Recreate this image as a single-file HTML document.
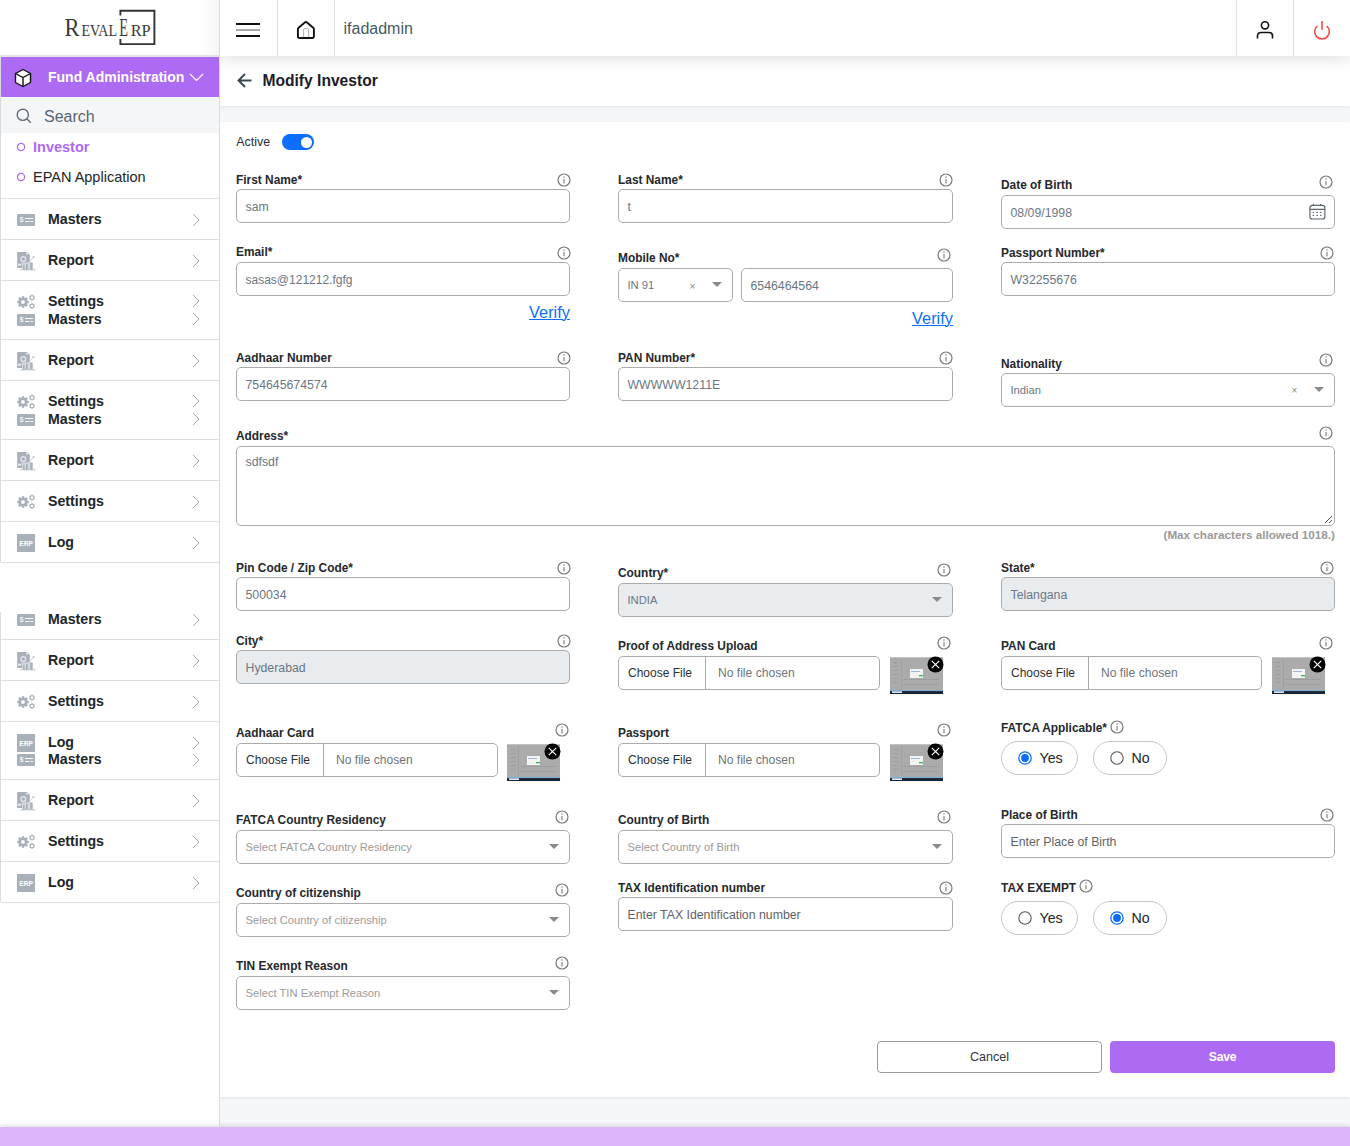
<!DOCTYPE html>
<html><head><meta charset="utf-8"><style>
html,body{margin:0;padding:0;width:1350px;height:1146px;overflow:hidden;background:#fff;}
body{position:relative;font-family:"Liberation Sans", sans-serif;}
.a{position:absolute;box-sizing:border-box;}
.t{position:absolute;white-space:nowrap;}
svg.a{overflow:visible}
</style></head><body>
<div class="a" style="left:220px;top:0;width:1130px;height:1146px;background:#f6f7f9"></div>
<div class="a" style="left:220px;top:122px;width:1130px;height:975px;background:#fff;box-shadow:0 1px 3px rgba(0,0,0,0.09)"></div>
<div class="a" style="left:220px;top:56px;width:1130px;height:50px;background:#fff;box-shadow:0 1px 4px rgba(0,0,0,0.08)"></div>
<div class="a" style="left:220px;top:0;width:1130px;height:56px;background:#fff;box-shadow:0 3px 15px rgba(0,0,0,0.125)"></div>
<div class="a" style="left:277px;top:0px;width:1px;height:56px;background:#dde1e6"></div>
<div class="a" style="left:334px;top:0px;width:1px;height:56px;background:#dde1e6"></div>
<div class="a" style="left:1236px;top:0px;width:1px;height:56px;background:#dde1e6"></div>
<div class="a" style="left:1293px;top:0px;width:1px;height:56px;background:#dde1e6"></div>
<div class="a" style="left:236px;top:23px;width:24px;height:2px;background:#111"></div>
<div class="a" style="left:236px;top:29px;width:24px;height:2px;background:#aaa"></div>
<div class="a" style="left:236px;top:35px;width:24px;height:2px;background:#111"></div>
<svg class="a" style="left:296px;top:20px;" width="20" height="20" viewBox="0 0 20 20"><path d="M1.9 9.2 Q1.9 8.4 2.6 7.8 L9.1 2.3 Q9.9 1.6 10.7 2.3 L17.2 7.8 Q17.9 8.4 17.9 9.2 V16.2 Q17.9 18 16.1 18 H3.7 Q1.9 18 1.9 16.2 Z" fill="none" stroke="#111" stroke-width="1.9" stroke-linejoin="round"/><path d="M7.6 17.2 V9.7 Q7.6 8.5 8.8 8.5 H11.4 Q12.6 8.5 12.6 9.7 V17.2" fill="none" stroke="#a8a8a8" stroke-width="0.9"/></svg>
<div class="t" style="left:343.5px;top:21px;font-size:16px;line-height:16px;color:#455a64;font-weight:400;">ifadadmin</div>
<svg class="a" style="left:1254px;top:19px;" width="22" height="22" viewBox="0 0 22 22"><circle cx="11" cy="6.3" r="3.6" fill="none" stroke="#111" stroke-width="1.6"/><path d="M3.5 19.5 V17 Q3.5 13.5 7 13.5 H15 Q18.5 13.5 18.5 17 V19.5" fill="none" stroke="#111" stroke-width="1.6"/></svg>
<svg class="a" style="left:1311px;top:19px;" width="22" height="22" viewBox="0 0 22 22"><path d="M6.4 7 A7.3 7.3 0 1 0 15.6 7" fill="none" stroke="#f44848" stroke-width="1.6"/><path d="M11 2 V10.8" stroke="#f44848" stroke-width="1.6"/></svg>
<svg class="a" style="left:236px;top:72px;" width="18" height="17" viewBox="0 0 18 17"><path d="M9 2 L2.5 8.5 L9 15 M2.5 8.5 H15.5" fill="none" stroke="#37474f" stroke-width="1.9"/></svg>
<div class="t" style="left:262.5px;top:73px;font-size:15.6px;line-height:15.6px;color:#1c1c28;font-weight:700;">Modify Investor</div>
<div class="a" style="left:0;top:0;width:219px;height:1126px;background:#fff"></div>
<div class="a" style="left:219px;top:0px;width:1px;height:1126px;background:#d8dce1"></div>
<div class="a" style="left:199px;top:0;width:20px;height:56px;background:linear-gradient(90deg,rgba(0,0,0,0),rgba(0,0,0,0.035))"></div>
<div class="a" style="left:0px;top:55px;width:219px;height:2px;background:#dfe3e6"></div>
<div class="a" style="left:0px;top:56px;width:1px;height:506px;background:#d8dce1"></div>
<div class="a" style="left:0px;top:612px;width:1px;height:290px;background:#d8dce1"></div>
<div class="a" style="left:1px;top:57px;width:218px;height:40px;background:#ad6bf4"></div>
<svg class="a" style="left:14px;top:68px;" width="18" height="20" viewBox="0 0 18 20"><path d="M9 1.5 L16.5 5.5 V14.5 L9 18.5 L1.5 14.5 V5.5 Z" fill="#fff" stroke="#111" stroke-width="1.4" stroke-linejoin="round"/><path d="M1.5 5.5 L9 9.5 L16.5 5.5 M9 9.5 V18.5" fill="none" stroke="#111" stroke-width="1.4"/></svg>
<div class="t" style="left:48px;top:70px;font-size:14px;line-height:14px;color:#fff;font-weight:700;">Fund Administration</div>
<svg class="a" style="left:189px;top:73px;" width="15" height="9" viewBox="0 0 15 9"><path d="M1 1 L7.5 7.5 L14 1" fill="none" stroke="#fff" stroke-width="1.1"/></svg>
<div class="a" style="left:1px;top:97px;width:218px;height:36px;background:#f5f6f8"></div>
<svg class="a" style="left:16px;top:108px;" width="16" height="16" viewBox="0 0 16 16"><circle cx="6.8" cy="6.8" r="5.6" fill="none" stroke="#5f6b75" stroke-width="1.4"/><path d="M10.8 10.8 L14.8 14.8" stroke="#5f6b75" stroke-width="1.4"/></svg>
<div class="t" style="left:44px;top:109px;font-size:16px;line-height:16px;color:#5a6470;font-weight:400;">Search</div>
<svg class="a" style="left:16px;top:142px;" width="10" height="10" viewBox="0 0 10 10"><circle cx="5" cy="5" r="3.6" fill="none" stroke="#ad6bf4" stroke-width="1.2"/></svg>
<div class="t" style="left:33px;top:140px;font-size:14.5px;line-height:14.5px;color:#ad6bf4;font-weight:700;">Investor</div>
<svg class="a" style="left:16px;top:172px;" width="10" height="10" viewBox="0 0 10 10"><circle cx="5" cy="5" r="3.6" fill="none" stroke="#ad6bf4" stroke-width="1.2"/></svg>
<div class="t" style="left:33px;top:170px;font-size:14.5px;line-height:14.5px;color:#212529;font-weight:400;">EPAN Application</div>
<div class="a" style="left:1px;top:198px;width:218px;height:1px;background:#dde1e6"></div>
<div class="a" style="left:1px;top:239px;width:218px;height:1px;background:#dde1e6"></div>
<div class="a" style="left:1px;top:280px;width:218px;height:1px;background:#dde1e6"></div>
<div class="a" style="left:1px;top:339px;width:218px;height:1px;background:#dde1e6"></div>
<div class="a" style="left:1px;top:380px;width:218px;height:1px;background:#dde1e6"></div>
<div class="a" style="left:1px;top:439px;width:218px;height:1px;background:#dde1e6"></div>
<div class="a" style="left:1px;top:480px;width:218px;height:1px;background:#dde1e6"></div>
<div class="a" style="left:1px;top:521px;width:218px;height:1px;background:#dde1e6"></div>
<div class="a" style="left:1px;top:562px;width:218px;height:1px;background:#dde1e6"></div>
<div class="a" style="left:1px;top:639px;width:218px;height:1px;background:#dde1e6"></div>
<div class="a" style="left:1px;top:680px;width:218px;height:1px;background:#dde1e6"></div>
<div class="a" style="left:1px;top:721px;width:218px;height:1px;background:#dde1e6"></div>
<div class="a" style="left:1px;top:779px;width:218px;height:1px;background:#dde1e6"></div>
<div class="a" style="left:1px;top:820px;width:218px;height:1px;background:#dde1e6"></div>
<div class="a" style="left:1px;top:861px;width:218px;height:1px;background:#dde1e6"></div>
<div class="a" style="left:1px;top:902px;width:218px;height:1px;background:#dde1e6"></div>
<svg class="a" style="left:17px;top:214px;" width="18" height="12" viewBox="0 0 18 12"><rect x="0" y="0" width="18" height="12" rx="1" fill="#a8b0ba"/><text x="4.5" y="8.0" font-size="7.4" font-weight="400" fill="#fff" text-anchor="middle" font-family="Liberation Sans">$</text><rect x="8" y="4" width="8.2" height="1" fill="#fff"/><rect x="8" y="7" width="4.5" height="1" fill="#fff"/><rect x="13.5" y="7" width="2.7" height="1" fill="#fff"/></svg>
<div class="t" style="left:48px;top:212px;font-size:14.2px;line-height:14.2px;color:#212529;font-weight:700;">Masters</div>
<svg class="a" style="left:192px;top:212.8px;" width="8" height="14" viewBox="0 0 8 14"><path d="M1 1 L7 7 L1 13" fill="none" stroke="#a6acb3" stroke-width="1.0"/></svg>
<svg class="a" style="left:17px;top:252px;" width="19" height="18" viewBox="0 0 19 18"><path d="M0.2 0 H10 L12.8 3 V16 H0.2 Z" fill="#a8b0ba"/><circle cx="10" cy="1.6" r="0.9" fill="#fff"/><circle cx="6.3" cy="7" r="2.4" fill="none" stroke="#e6e9ec" stroke-width="1.3"/><rect x="1" y="11.6" width="3.4" height="2" fill="#e6e9ec"/><rect x="5" y="10.5" width="10.5" height="7.2" fill="#d5dade"/><rect x="6" y="13" width="1.6" height="4.5" fill="#a8b0ba"/><rect x="9" y="11.5" width="1.6" height="6" fill="#a8b0ba"/><rect x="13.3" y="10.5" width="2.3" height="7" fill="#a8b0ba"/><path d="M7.5 9 L10 11.5 L12 10.5 L16.5 5" fill="none" stroke="#cfd4d9" stroke-width="1"/><circle cx="16.5" cy="5" r="1" fill="#b8bfc6"/><rect x="3" y="17.3" width="15.5" height="1" fill="#a8b0ba" opacity="0.8"/></svg>
<div class="t" style="left:48px;top:253px;font-size:14.2px;line-height:14.2px;color:#212529;font-weight:700;">Report</div>
<svg class="a" style="left:192px;top:253.5px;" width="8" height="14" viewBox="0 0 8 14"><path d="M1 1 L7 7 L1 13" fill="none" stroke="#a6acb3" stroke-width="1.0"/></svg>
<svg class="a" style="left:16px;top:293px;" width="19" height="16" viewBox="0 0 19 16"><circle cx="7" cy="9" r="4.524" fill="#a8b0ba"/><rect x="5.8" y="3.2" width="2.4" height="5.8" fill="#a8b0ba" transform="rotate(0.0 7 9)"/><rect x="5.8" y="3.2" width="2.4" height="5.8" fill="#a8b0ba" transform="rotate(45.0 7 9)"/><rect x="5.8" y="3.2" width="2.4" height="5.8" fill="#a8b0ba" transform="rotate(90.0 7 9)"/><rect x="5.8" y="3.2" width="2.4" height="5.8" fill="#a8b0ba" transform="rotate(135.0 7 9)"/><rect x="5.8" y="3.2" width="2.4" height="5.8" fill="#a8b0ba" transform="rotate(180.0 7 9)"/><rect x="5.8" y="3.2" width="2.4" height="5.8" fill="#a8b0ba" transform="rotate(225.0 7 9)"/><rect x="5.8" y="3.2" width="2.4" height="5.8" fill="#a8b0ba" transform="rotate(270.0 7 9)"/><rect x="5.8" y="3.2" width="2.4" height="5.8" fill="#a8b0ba" transform="rotate(315.0 7 9)"/><circle cx="7" cy="9" r="1.9" fill="#fff"/><circle cx="16" cy="4.6" r="2.262" fill="#a8b0ba"/><rect x="15.25" y="1.6999999999999997" width="1.5" height="2.9" fill="#a8b0ba" transform="rotate(0.0 16 4.6)"/><rect x="15.25" y="1.6999999999999997" width="1.5" height="2.9" fill="#a8b0ba" transform="rotate(60.0 16 4.6)"/><rect x="15.25" y="1.6999999999999997" width="1.5" height="2.9" fill="#a8b0ba" transform="rotate(120.0 16 4.6)"/><rect x="15.25" y="1.6999999999999997" width="1.5" height="2.9" fill="#a8b0ba" transform="rotate(180.0 16 4.6)"/><rect x="15.25" y="1.6999999999999997" width="1.5" height="2.9" fill="#a8b0ba" transform="rotate(240.0 16 4.6)"/><rect x="15.25" y="1.6999999999999997" width="1.5" height="2.9" fill="#a8b0ba" transform="rotate(300.0 16 4.6)"/><circle cx="16" cy="4.6" r="1.3" fill="#fff"/><circle cx="16" cy="13" r="2.262" fill="#a8b0ba"/><rect x="15.25" y="10.1" width="1.5" height="2.9" fill="#a8b0ba" transform="rotate(0.0 16 13)"/><rect x="15.25" y="10.1" width="1.5" height="2.9" fill="#a8b0ba" transform="rotate(60.0 16 13)"/><rect x="15.25" y="10.1" width="1.5" height="2.9" fill="#a8b0ba" transform="rotate(120.0 16 13)"/><rect x="15.25" y="10.1" width="1.5" height="2.9" fill="#a8b0ba" transform="rotate(180.0 16 13)"/><rect x="15.25" y="10.1" width="1.5" height="2.9" fill="#a8b0ba" transform="rotate(240.0 16 13)"/><rect x="15.25" y="10.1" width="1.5" height="2.9" fill="#a8b0ba" transform="rotate(300.0 16 13)"/><circle cx="16" cy="13" r="1.3" fill="#fff"/></svg>
<div class="t" style="left:48px;top:294px;font-size:14.2px;line-height:14.2px;color:#212529;font-weight:700;">Settings</div>
<svg class="a" style="left:192px;top:294.3px;" width="8" height="14" viewBox="0 0 8 14"><path d="M1 1 L7 7 L1 13" fill="none" stroke="#a6acb3" stroke-width="1.0"/></svg>
<svg class="a" style="left:17px;top:314px;" width="18" height="12" viewBox="0 0 18 12"><rect x="0" y="0" width="18" height="12" rx="1" fill="#a8b0ba"/><text x="4.5" y="8.0" font-size="7.4" font-weight="400" fill="#fff" text-anchor="middle" font-family="Liberation Sans">$</text><rect x="8" y="4" width="8.2" height="1" fill="#fff"/><rect x="8" y="7" width="4.5" height="1" fill="#fff"/><rect x="13.5" y="7" width="2.7" height="1" fill="#fff"/></svg>
<div class="t" style="left:48px;top:312px;font-size:14.2px;line-height:14.2px;color:#212529;font-weight:700;">Masters</div>
<svg class="a" style="left:192px;top:312.2px;" width="8" height="14" viewBox="0 0 8 14"><path d="M1 1 L7 7 L1 13" fill="none" stroke="#a6acb3" stroke-width="1.0"/></svg>
<svg class="a" style="left:17px;top:352px;" width="19" height="18" viewBox="0 0 19 18"><path d="M0.2 0 H10 L12.8 3 V16 H0.2 Z" fill="#a8b0ba"/><circle cx="10" cy="1.6" r="0.9" fill="#fff"/><circle cx="6.3" cy="7" r="2.4" fill="none" stroke="#e6e9ec" stroke-width="1.3"/><rect x="1" y="11.6" width="3.4" height="2" fill="#e6e9ec"/><rect x="5" y="10.5" width="10.5" height="7.2" fill="#d5dade"/><rect x="6" y="13" width="1.6" height="4.5" fill="#a8b0ba"/><rect x="9" y="11.5" width="1.6" height="6" fill="#a8b0ba"/><rect x="13.3" y="10.5" width="2.3" height="7" fill="#a8b0ba"/><path d="M7.5 9 L10 11.5 L12 10.5 L16.5 5" fill="none" stroke="#cfd4d9" stroke-width="1"/><circle cx="16.5" cy="5" r="1" fill="#b8bfc6"/><rect x="3" y="17.3" width="15.5" height="1" fill="#a8b0ba" opacity="0.8"/></svg>
<div class="t" style="left:48px;top:353px;font-size:14.2px;line-height:14.2px;color:#212529;font-weight:700;">Report</div>
<svg class="a" style="left:192px;top:353.5px;" width="8" height="14" viewBox="0 0 8 14"><path d="M1 1 L7 7 L1 13" fill="none" stroke="#a6acb3" stroke-width="1.0"/></svg>
<svg class="a" style="left:16px;top:393px;" width="19" height="16" viewBox="0 0 19 16"><circle cx="7" cy="9" r="4.524" fill="#a8b0ba"/><rect x="5.8" y="3.2" width="2.4" height="5.8" fill="#a8b0ba" transform="rotate(0.0 7 9)"/><rect x="5.8" y="3.2" width="2.4" height="5.8" fill="#a8b0ba" transform="rotate(45.0 7 9)"/><rect x="5.8" y="3.2" width="2.4" height="5.8" fill="#a8b0ba" transform="rotate(90.0 7 9)"/><rect x="5.8" y="3.2" width="2.4" height="5.8" fill="#a8b0ba" transform="rotate(135.0 7 9)"/><rect x="5.8" y="3.2" width="2.4" height="5.8" fill="#a8b0ba" transform="rotate(180.0 7 9)"/><rect x="5.8" y="3.2" width="2.4" height="5.8" fill="#a8b0ba" transform="rotate(225.0 7 9)"/><rect x="5.8" y="3.2" width="2.4" height="5.8" fill="#a8b0ba" transform="rotate(270.0 7 9)"/><rect x="5.8" y="3.2" width="2.4" height="5.8" fill="#a8b0ba" transform="rotate(315.0 7 9)"/><circle cx="7" cy="9" r="1.9" fill="#fff"/><circle cx="16" cy="4.6" r="2.262" fill="#a8b0ba"/><rect x="15.25" y="1.6999999999999997" width="1.5" height="2.9" fill="#a8b0ba" transform="rotate(0.0 16 4.6)"/><rect x="15.25" y="1.6999999999999997" width="1.5" height="2.9" fill="#a8b0ba" transform="rotate(60.0 16 4.6)"/><rect x="15.25" y="1.6999999999999997" width="1.5" height="2.9" fill="#a8b0ba" transform="rotate(120.0 16 4.6)"/><rect x="15.25" y="1.6999999999999997" width="1.5" height="2.9" fill="#a8b0ba" transform="rotate(180.0 16 4.6)"/><rect x="15.25" y="1.6999999999999997" width="1.5" height="2.9" fill="#a8b0ba" transform="rotate(240.0 16 4.6)"/><rect x="15.25" y="1.6999999999999997" width="1.5" height="2.9" fill="#a8b0ba" transform="rotate(300.0 16 4.6)"/><circle cx="16" cy="4.6" r="1.3" fill="#fff"/><circle cx="16" cy="13" r="2.262" fill="#a8b0ba"/><rect x="15.25" y="10.1" width="1.5" height="2.9" fill="#a8b0ba" transform="rotate(0.0 16 13)"/><rect x="15.25" y="10.1" width="1.5" height="2.9" fill="#a8b0ba" transform="rotate(60.0 16 13)"/><rect x="15.25" y="10.1" width="1.5" height="2.9" fill="#a8b0ba" transform="rotate(120.0 16 13)"/><rect x="15.25" y="10.1" width="1.5" height="2.9" fill="#a8b0ba" transform="rotate(180.0 16 13)"/><rect x="15.25" y="10.1" width="1.5" height="2.9" fill="#a8b0ba" transform="rotate(240.0 16 13)"/><rect x="15.25" y="10.1" width="1.5" height="2.9" fill="#a8b0ba" transform="rotate(300.0 16 13)"/><circle cx="16" cy="13" r="1.3" fill="#fff"/></svg>
<div class="t" style="left:48px;top:394px;font-size:14.2px;line-height:14.2px;color:#212529;font-weight:700;">Settings</div>
<svg class="a" style="left:192px;top:394.3px;" width="8" height="14" viewBox="0 0 8 14"><path d="M1 1 L7 7 L1 13" fill="none" stroke="#a6acb3" stroke-width="1.0"/></svg>
<svg class="a" style="left:17px;top:414px;" width="18" height="12" viewBox="0 0 18 12"><rect x="0" y="0" width="18" height="12" rx="1" fill="#a8b0ba"/><text x="4.5" y="8.0" font-size="7.4" font-weight="400" fill="#fff" text-anchor="middle" font-family="Liberation Sans">$</text><rect x="8" y="4" width="8.2" height="1" fill="#fff"/><rect x="8" y="7" width="4.5" height="1" fill="#fff"/><rect x="13.5" y="7" width="2.7" height="1" fill="#fff"/></svg>
<div class="t" style="left:48px;top:412px;font-size:14.2px;line-height:14.2px;color:#212529;font-weight:700;">Masters</div>
<svg class="a" style="left:192px;top:412.2px;" width="8" height="14" viewBox="0 0 8 14"><path d="M1 1 L7 7 L1 13" fill="none" stroke="#a6acb3" stroke-width="1.0"/></svg>
<svg class="a" style="left:17px;top:452px;" width="19" height="18" viewBox="0 0 19 18"><path d="M0.2 0 H10 L12.8 3 V16 H0.2 Z" fill="#a8b0ba"/><circle cx="10" cy="1.6" r="0.9" fill="#fff"/><circle cx="6.3" cy="7" r="2.4" fill="none" stroke="#e6e9ec" stroke-width="1.3"/><rect x="1" y="11.6" width="3.4" height="2" fill="#e6e9ec"/><rect x="5" y="10.5" width="10.5" height="7.2" fill="#d5dade"/><rect x="6" y="13" width="1.6" height="4.5" fill="#a8b0ba"/><rect x="9" y="11.5" width="1.6" height="6" fill="#a8b0ba"/><rect x="13.3" y="10.5" width="2.3" height="7" fill="#a8b0ba"/><path d="M7.5 9 L10 11.5 L12 10.5 L16.5 5" fill="none" stroke="#cfd4d9" stroke-width="1"/><circle cx="16.5" cy="5" r="1" fill="#b8bfc6"/><rect x="3" y="17.3" width="15.5" height="1" fill="#a8b0ba" opacity="0.8"/></svg>
<div class="t" style="left:48px;top:453px;font-size:14.2px;line-height:14.2px;color:#212529;font-weight:700;">Report</div>
<svg class="a" style="left:192px;top:453.5px;" width="8" height="14" viewBox="0 0 8 14"><path d="M1 1 L7 7 L1 13" fill="none" stroke="#a6acb3" stroke-width="1.0"/></svg>
<svg class="a" style="left:16px;top:493px;" width="19" height="16" viewBox="0 0 19 16"><circle cx="7" cy="9" r="4.524" fill="#a8b0ba"/><rect x="5.8" y="3.2" width="2.4" height="5.8" fill="#a8b0ba" transform="rotate(0.0 7 9)"/><rect x="5.8" y="3.2" width="2.4" height="5.8" fill="#a8b0ba" transform="rotate(45.0 7 9)"/><rect x="5.8" y="3.2" width="2.4" height="5.8" fill="#a8b0ba" transform="rotate(90.0 7 9)"/><rect x="5.8" y="3.2" width="2.4" height="5.8" fill="#a8b0ba" transform="rotate(135.0 7 9)"/><rect x="5.8" y="3.2" width="2.4" height="5.8" fill="#a8b0ba" transform="rotate(180.0 7 9)"/><rect x="5.8" y="3.2" width="2.4" height="5.8" fill="#a8b0ba" transform="rotate(225.0 7 9)"/><rect x="5.8" y="3.2" width="2.4" height="5.8" fill="#a8b0ba" transform="rotate(270.0 7 9)"/><rect x="5.8" y="3.2" width="2.4" height="5.8" fill="#a8b0ba" transform="rotate(315.0 7 9)"/><circle cx="7" cy="9" r="1.9" fill="#fff"/><circle cx="16" cy="4.6" r="2.262" fill="#a8b0ba"/><rect x="15.25" y="1.6999999999999997" width="1.5" height="2.9" fill="#a8b0ba" transform="rotate(0.0 16 4.6)"/><rect x="15.25" y="1.6999999999999997" width="1.5" height="2.9" fill="#a8b0ba" transform="rotate(60.0 16 4.6)"/><rect x="15.25" y="1.6999999999999997" width="1.5" height="2.9" fill="#a8b0ba" transform="rotate(120.0 16 4.6)"/><rect x="15.25" y="1.6999999999999997" width="1.5" height="2.9" fill="#a8b0ba" transform="rotate(180.0 16 4.6)"/><rect x="15.25" y="1.6999999999999997" width="1.5" height="2.9" fill="#a8b0ba" transform="rotate(240.0 16 4.6)"/><rect x="15.25" y="1.6999999999999997" width="1.5" height="2.9" fill="#a8b0ba" transform="rotate(300.0 16 4.6)"/><circle cx="16" cy="4.6" r="1.3" fill="#fff"/><circle cx="16" cy="13" r="2.262" fill="#a8b0ba"/><rect x="15.25" y="10.1" width="1.5" height="2.9" fill="#a8b0ba" transform="rotate(0.0 16 13)"/><rect x="15.25" y="10.1" width="1.5" height="2.9" fill="#a8b0ba" transform="rotate(60.0 16 13)"/><rect x="15.25" y="10.1" width="1.5" height="2.9" fill="#a8b0ba" transform="rotate(120.0 16 13)"/><rect x="15.25" y="10.1" width="1.5" height="2.9" fill="#a8b0ba" transform="rotate(180.0 16 13)"/><rect x="15.25" y="10.1" width="1.5" height="2.9" fill="#a8b0ba" transform="rotate(240.0 16 13)"/><rect x="15.25" y="10.1" width="1.5" height="2.9" fill="#a8b0ba" transform="rotate(300.0 16 13)"/><circle cx="16" cy="13" r="1.3" fill="#fff"/></svg>
<div class="t" style="left:48px;top:494px;font-size:14.2px;line-height:14.2px;color:#212529;font-weight:700;">Settings</div>
<svg class="a" style="left:192px;top:494.5px;" width="8" height="14" viewBox="0 0 8 14"><path d="M1 1 L7 7 L1 13" fill="none" stroke="#a6acb3" stroke-width="1.0"/></svg>
<svg class="a" style="left:17px;top:534px;" width="18" height="18" viewBox="0 0 18 18"><rect x="0" y="0" width="18" height="18" fill="#a8b0ba"/><text x="2.3" y="11.8" font-size="7.8" font-weight="700" fill="#fff" font-family="Liberation Sans" textLength="13.6" lengthAdjust="spacingAndGlyphs">ERP</text></svg>
<div class="t" style="left:48px;top:535px;font-size:14.2px;line-height:14.2px;color:#212529;font-weight:700;">Log</div>
<svg class="a" style="left:192px;top:535.5px;" width="8" height="14" viewBox="0 0 8 14"><path d="M1 1 L7 7 L1 13" fill="none" stroke="#a6acb3" stroke-width="1.0"/></svg>
<svg class="a" style="left:17px;top:614px;" width="18" height="12" viewBox="0 0 18 12"><rect x="0" y="0" width="18" height="12" rx="1" fill="#a8b0ba"/><text x="4.5" y="8.0" font-size="7.4" font-weight="400" fill="#fff" text-anchor="middle" font-family="Liberation Sans">$</text><rect x="8" y="4" width="8.2" height="1" fill="#fff"/><rect x="8" y="7" width="4.5" height="1" fill="#fff"/><rect x="13.5" y="7" width="2.7" height="1" fill="#fff"/></svg>
<div class="t" style="left:48px;top:612px;font-size:14.2px;line-height:14.2px;color:#212529;font-weight:700;">Masters</div>
<svg class="a" style="left:192px;top:612.5px;" width="8" height="14" viewBox="0 0 8 14"><path d="M1 1 L7 7 L1 13" fill="none" stroke="#a6acb3" stroke-width="1.0"/></svg>
<svg class="a" style="left:17px;top:652px;" width="19" height="18" viewBox="0 0 19 18"><path d="M0.2 0 H10 L12.8 3 V16 H0.2 Z" fill="#a8b0ba"/><circle cx="10" cy="1.6" r="0.9" fill="#fff"/><circle cx="6.3" cy="7" r="2.4" fill="none" stroke="#e6e9ec" stroke-width="1.3"/><rect x="1" y="11.6" width="3.4" height="2" fill="#e6e9ec"/><rect x="5" y="10.5" width="10.5" height="7.2" fill="#d5dade"/><rect x="6" y="13" width="1.6" height="4.5" fill="#a8b0ba"/><rect x="9" y="11.5" width="1.6" height="6" fill="#a8b0ba"/><rect x="13.3" y="10.5" width="2.3" height="7" fill="#a8b0ba"/><path d="M7.5 9 L10 11.5 L12 10.5 L16.5 5" fill="none" stroke="#cfd4d9" stroke-width="1"/><circle cx="16.5" cy="5" r="1" fill="#b8bfc6"/><rect x="3" y="17.3" width="15.5" height="1" fill="#a8b0ba" opacity="0.8"/></svg>
<div class="t" style="left:48px;top:653px;font-size:14.2px;line-height:14.2px;color:#212529;font-weight:700;">Report</div>
<svg class="a" style="left:192px;top:653.5px;" width="8" height="14" viewBox="0 0 8 14"><path d="M1 1 L7 7 L1 13" fill="none" stroke="#a6acb3" stroke-width="1.0"/></svg>
<svg class="a" style="left:16px;top:693px;" width="19" height="16" viewBox="0 0 19 16"><circle cx="7" cy="9" r="4.524" fill="#a8b0ba"/><rect x="5.8" y="3.2" width="2.4" height="5.8" fill="#a8b0ba" transform="rotate(0.0 7 9)"/><rect x="5.8" y="3.2" width="2.4" height="5.8" fill="#a8b0ba" transform="rotate(45.0 7 9)"/><rect x="5.8" y="3.2" width="2.4" height="5.8" fill="#a8b0ba" transform="rotate(90.0 7 9)"/><rect x="5.8" y="3.2" width="2.4" height="5.8" fill="#a8b0ba" transform="rotate(135.0 7 9)"/><rect x="5.8" y="3.2" width="2.4" height="5.8" fill="#a8b0ba" transform="rotate(180.0 7 9)"/><rect x="5.8" y="3.2" width="2.4" height="5.8" fill="#a8b0ba" transform="rotate(225.0 7 9)"/><rect x="5.8" y="3.2" width="2.4" height="5.8" fill="#a8b0ba" transform="rotate(270.0 7 9)"/><rect x="5.8" y="3.2" width="2.4" height="5.8" fill="#a8b0ba" transform="rotate(315.0 7 9)"/><circle cx="7" cy="9" r="1.9" fill="#fff"/><circle cx="16" cy="4.6" r="2.262" fill="#a8b0ba"/><rect x="15.25" y="1.6999999999999997" width="1.5" height="2.9" fill="#a8b0ba" transform="rotate(0.0 16 4.6)"/><rect x="15.25" y="1.6999999999999997" width="1.5" height="2.9" fill="#a8b0ba" transform="rotate(60.0 16 4.6)"/><rect x="15.25" y="1.6999999999999997" width="1.5" height="2.9" fill="#a8b0ba" transform="rotate(120.0 16 4.6)"/><rect x="15.25" y="1.6999999999999997" width="1.5" height="2.9" fill="#a8b0ba" transform="rotate(180.0 16 4.6)"/><rect x="15.25" y="1.6999999999999997" width="1.5" height="2.9" fill="#a8b0ba" transform="rotate(240.0 16 4.6)"/><rect x="15.25" y="1.6999999999999997" width="1.5" height="2.9" fill="#a8b0ba" transform="rotate(300.0 16 4.6)"/><circle cx="16" cy="4.6" r="1.3" fill="#fff"/><circle cx="16" cy="13" r="2.262" fill="#a8b0ba"/><rect x="15.25" y="10.1" width="1.5" height="2.9" fill="#a8b0ba" transform="rotate(0.0 16 13)"/><rect x="15.25" y="10.1" width="1.5" height="2.9" fill="#a8b0ba" transform="rotate(60.0 16 13)"/><rect x="15.25" y="10.1" width="1.5" height="2.9" fill="#a8b0ba" transform="rotate(120.0 16 13)"/><rect x="15.25" y="10.1" width="1.5" height="2.9" fill="#a8b0ba" transform="rotate(180.0 16 13)"/><rect x="15.25" y="10.1" width="1.5" height="2.9" fill="#a8b0ba" transform="rotate(240.0 16 13)"/><rect x="15.25" y="10.1" width="1.5" height="2.9" fill="#a8b0ba" transform="rotate(300.0 16 13)"/><circle cx="16" cy="13" r="1.3" fill="#fff"/></svg>
<div class="t" style="left:48px;top:694px;font-size:14.2px;line-height:14.2px;color:#212529;font-weight:700;">Settings</div>
<svg class="a" style="left:192px;top:694.5px;" width="8" height="14" viewBox="0 0 8 14"><path d="M1 1 L7 7 L1 13" fill="none" stroke="#a6acb3" stroke-width="1.0"/></svg>
<svg class="a" style="left:17px;top:734px;" width="18" height="18" viewBox="0 0 18 18"><rect x="0" y="0" width="18" height="18" fill="#a8b0ba"/><text x="2.3" y="11.8" font-size="7.8" font-weight="700" fill="#fff" font-family="Liberation Sans" textLength="13.6" lengthAdjust="spacingAndGlyphs">ERP</text></svg>
<div class="t" style="left:48px;top:735px;font-size:14.2px;line-height:14.2px;color:#212529;font-weight:700;">Log</div>
<svg class="a" style="left:192px;top:735.5px;" width="8" height="14" viewBox="0 0 8 14"><path d="M1 1 L7 7 L1 13" fill="none" stroke="#a6acb3" stroke-width="1.0"/></svg>
<svg class="a" style="left:17px;top:754px;" width="18" height="12" viewBox="0 0 18 12"><rect x="0" y="0" width="18" height="12" rx="1" fill="#a8b0ba"/><text x="4.5" y="8.0" font-size="7.4" font-weight="400" fill="#fff" text-anchor="middle" font-family="Liberation Sans">$</text><rect x="8" y="4" width="8.2" height="1" fill="#fff"/><rect x="8" y="7" width="4.5" height="1" fill="#fff"/><rect x="13.5" y="7" width="2.7" height="1" fill="#fff"/></svg>
<div class="t" style="left:48px;top:752px;font-size:14.2px;line-height:14.2px;color:#212529;font-weight:700;">Masters</div>
<svg class="a" style="left:192px;top:753.0px;" width="8" height="14" viewBox="0 0 8 14"><path d="M1 1 L7 7 L1 13" fill="none" stroke="#a6acb3" stroke-width="1.0"/></svg>
<svg class="a" style="left:17px;top:792px;" width="19" height="18" viewBox="0 0 19 18"><path d="M0.2 0 H10 L12.8 3 V16 H0.2 Z" fill="#a8b0ba"/><circle cx="10" cy="1.6" r="0.9" fill="#fff"/><circle cx="6.3" cy="7" r="2.4" fill="none" stroke="#e6e9ec" stroke-width="1.3"/><rect x="1" y="11.6" width="3.4" height="2" fill="#e6e9ec"/><rect x="5" y="10.5" width="10.5" height="7.2" fill="#d5dade"/><rect x="6" y="13" width="1.6" height="4.5" fill="#a8b0ba"/><rect x="9" y="11.5" width="1.6" height="6" fill="#a8b0ba"/><rect x="13.3" y="10.5" width="2.3" height="7" fill="#a8b0ba"/><path d="M7.5 9 L10 11.5 L12 10.5 L16.5 5" fill="none" stroke="#cfd4d9" stroke-width="1"/><circle cx="16.5" cy="5" r="1" fill="#b8bfc6"/><rect x="3" y="17.3" width="15.5" height="1" fill="#a8b0ba" opacity="0.8"/></svg>
<div class="t" style="left:48px;top:793px;font-size:14.2px;line-height:14.2px;color:#212529;font-weight:700;">Report</div>
<svg class="a" style="left:192px;top:793.5px;" width="8" height="14" viewBox="0 0 8 14"><path d="M1 1 L7 7 L1 13" fill="none" stroke="#a6acb3" stroke-width="1.0"/></svg>
<svg class="a" style="left:16px;top:833px;" width="19" height="16" viewBox="0 0 19 16"><circle cx="7" cy="9" r="4.524" fill="#a8b0ba"/><rect x="5.8" y="3.2" width="2.4" height="5.8" fill="#a8b0ba" transform="rotate(0.0 7 9)"/><rect x="5.8" y="3.2" width="2.4" height="5.8" fill="#a8b0ba" transform="rotate(45.0 7 9)"/><rect x="5.8" y="3.2" width="2.4" height="5.8" fill="#a8b0ba" transform="rotate(90.0 7 9)"/><rect x="5.8" y="3.2" width="2.4" height="5.8" fill="#a8b0ba" transform="rotate(135.0 7 9)"/><rect x="5.8" y="3.2" width="2.4" height="5.8" fill="#a8b0ba" transform="rotate(180.0 7 9)"/><rect x="5.8" y="3.2" width="2.4" height="5.8" fill="#a8b0ba" transform="rotate(225.0 7 9)"/><rect x="5.8" y="3.2" width="2.4" height="5.8" fill="#a8b0ba" transform="rotate(270.0 7 9)"/><rect x="5.8" y="3.2" width="2.4" height="5.8" fill="#a8b0ba" transform="rotate(315.0 7 9)"/><circle cx="7" cy="9" r="1.9" fill="#fff"/><circle cx="16" cy="4.6" r="2.262" fill="#a8b0ba"/><rect x="15.25" y="1.6999999999999997" width="1.5" height="2.9" fill="#a8b0ba" transform="rotate(0.0 16 4.6)"/><rect x="15.25" y="1.6999999999999997" width="1.5" height="2.9" fill="#a8b0ba" transform="rotate(60.0 16 4.6)"/><rect x="15.25" y="1.6999999999999997" width="1.5" height="2.9" fill="#a8b0ba" transform="rotate(120.0 16 4.6)"/><rect x="15.25" y="1.6999999999999997" width="1.5" height="2.9" fill="#a8b0ba" transform="rotate(180.0 16 4.6)"/><rect x="15.25" y="1.6999999999999997" width="1.5" height="2.9" fill="#a8b0ba" transform="rotate(240.0 16 4.6)"/><rect x="15.25" y="1.6999999999999997" width="1.5" height="2.9" fill="#a8b0ba" transform="rotate(300.0 16 4.6)"/><circle cx="16" cy="4.6" r="1.3" fill="#fff"/><circle cx="16" cy="13" r="2.262" fill="#a8b0ba"/><rect x="15.25" y="10.1" width="1.5" height="2.9" fill="#a8b0ba" transform="rotate(0.0 16 13)"/><rect x="15.25" y="10.1" width="1.5" height="2.9" fill="#a8b0ba" transform="rotate(60.0 16 13)"/><rect x="15.25" y="10.1" width="1.5" height="2.9" fill="#a8b0ba" transform="rotate(120.0 16 13)"/><rect x="15.25" y="10.1" width="1.5" height="2.9" fill="#a8b0ba" transform="rotate(180.0 16 13)"/><rect x="15.25" y="10.1" width="1.5" height="2.9" fill="#a8b0ba" transform="rotate(240.0 16 13)"/><rect x="15.25" y="10.1" width="1.5" height="2.9" fill="#a8b0ba" transform="rotate(300.0 16 13)"/><circle cx="16" cy="13" r="1.3" fill="#fff"/></svg>
<div class="t" style="left:48px;top:834px;font-size:14.2px;line-height:14.2px;color:#212529;font-weight:700;">Settings</div>
<svg class="a" style="left:192px;top:834.5px;" width="8" height="14" viewBox="0 0 8 14"><path d="M1 1 L7 7 L1 13" fill="none" stroke="#a6acb3" stroke-width="1.0"/></svg>
<svg class="a" style="left:17px;top:874px;" width="18" height="18" viewBox="0 0 18 18"><rect x="0" y="0" width="18" height="18" fill="#a8b0ba"/><text x="2.3" y="11.8" font-size="7.8" font-weight="700" fill="#fff" font-family="Liberation Sans" textLength="13.6" lengthAdjust="spacingAndGlyphs">ERP</text></svg>
<div class="t" style="left:48px;top:875px;font-size:14.2px;line-height:14.2px;color:#212529;font-weight:700;">Log</div>
<svg class="a" style="left:192px;top:875.5px;" width="8" height="14" viewBox="0 0 8 14"><path d="M1 1 L7 7 L1 13" fill="none" stroke="#a6acb3" stroke-width="1.0"/></svg>
<div class="t" style="left:236.3px;top:136px;font-size:12.4px;line-height:12.4px;color:#2b2f33;font-weight:400;">Active</div>
<div class="a" style="left:282px;top:134px;width:32px;height:16px;background:#0d6efd;border-radius:8px"></div>
<div class="a" style="left:300.5px;top:136.5px;width:11px;height:11px;background:#fff;border-radius:50%"></div>
<div class="t" style="left:236px;top:175px;font-size:11.9px;line-height:11.9px;color:#25282d;font-weight:700;">First Name*</div>
<svg class="a" style="left:556.5px;top:173px;" width="14" height="14" viewBox="0 0 14 14"><circle cx="7" cy="7" r="6" fill="none" stroke="#7a7a7a" stroke-width="1.2"/><rect x="6.45" y="6" width="1.1" height="4.4" fill="#7a7a7a"/><circle cx="7" cy="4.1" r="0.75" fill="#7a7a7a"/></svg>
<div class="a" style="left:236px;top:189px;width:334px;height:34px;border:1px solid #ababab;border-radius:5px;background:#fff"></div>
<div class="t" style="left:245.5px;top:201px;font-size:12.3px;line-height:12.3px;color:#6b7785;font-weight:400;">sam</div>
<div class="t" style="left:236px;top:247px;font-size:11.9px;line-height:11.9px;color:#25282d;font-weight:700;">Email*</div>
<svg class="a" style="left:556.5px;top:246px;" width="14" height="14" viewBox="0 0 14 14"><circle cx="7" cy="7" r="6" fill="none" stroke="#7a7a7a" stroke-width="1.2"/><rect x="6.45" y="6" width="1.1" height="4.4" fill="#7a7a7a"/><circle cx="7" cy="4.1" r="0.75" fill="#7a7a7a"/></svg>
<div class="a" style="left:236px;top:262px;width:334px;height:34px;border:1px solid #ababab;border-radius:5px;background:#fff"></div>
<div class="t" style="left:245.5px;top:274px;font-size:12.0px;line-height:12.0px;color:#6b7785;font-weight:400;">sasas@121212.fgfg</div>
<div class="t" style="right:780px;top:304px;font-size:16.4px;line-height:16.4px;color:#0d6efd;font-weight:400;text-decoration:underline;text-underline-offset:1px;text-decoration-thickness:1px">Verify</div>
<div class="t" style="left:236px;top:353px;font-size:11.9px;line-height:11.9px;color:#25282d;font-weight:700;">Aadhaar Number</div>
<svg class="a" style="left:556.5px;top:350.5px;" width="14" height="14" viewBox="0 0 14 14"><circle cx="7" cy="7" r="6" fill="none" stroke="#7a7a7a" stroke-width="1.2"/><rect x="6.45" y="6" width="1.1" height="4.4" fill="#7a7a7a"/><circle cx="7" cy="4.1" r="0.75" fill="#7a7a7a"/></svg>
<div class="a" style="left:236px;top:367px;width:334px;height:34px;border:1px solid #ababab;border-radius:5px;background:#fff"></div>
<div class="t" style="left:245.5px;top:379px;font-size:12.3px;line-height:12.3px;color:#6b7785;font-weight:400;">754645674574</div>
<div class="t" style="left:236px;top:431px;font-size:11.9px;line-height:11.9px;color:#25282d;font-weight:700;">Address*</div>
<svg class="a" style="left:1319px;top:426px;" width="14" height="14" viewBox="0 0 14 14"><circle cx="7" cy="7" r="6" fill="none" stroke="#7a7a7a" stroke-width="1.2"/><rect x="6.45" y="6" width="1.1" height="4.4" fill="#7a7a7a"/><circle cx="7" cy="4.1" r="0.75" fill="#7a7a7a"/></svg>
<div class="a" style="left:236px;top:446px;width:1099px;height:80px;border:1px solid #ababab;border-radius:5px;background:#fff"></div>
<div class="t" style="left:245.5px;top:456px;font-size:12.3px;line-height:12.3px;color:#6b7785;font-weight:400;">sdfsdf</div>
<svg class="a" style="left:1323px;top:514px;" width="10" height="10" viewBox="0 0 10 10"><path d="M9 2 L2 9 M9 6 L6 9" stroke="#444" stroke-width="0.9"/></svg>
<div class="t" style="right:15px;top:529px;font-size:11.7px;line-height:11.7px;color:#9a9a9a;font-weight:700;">(Max characters allowed 1018.)</div>
<div class="t" style="left:236px;top:563px;font-size:11.9px;line-height:11.9px;color:#25282d;font-weight:700;">Pin Code / Zip Code*</div>
<svg class="a" style="left:556.5px;top:560.5px;" width="14" height="14" viewBox="0 0 14 14"><circle cx="7" cy="7" r="6" fill="none" stroke="#7a7a7a" stroke-width="1.2"/><rect x="6.45" y="6" width="1.1" height="4.4" fill="#7a7a7a"/><circle cx="7" cy="4.1" r="0.75" fill="#7a7a7a"/></svg>
<div class="a" style="left:236px;top:577px;width:334px;height:34px;border:1px solid #ababab;border-radius:5px;background:#fff"></div>
<div class="t" style="left:245.5px;top:589px;font-size:12.3px;line-height:12.3px;color:#6b7785;font-weight:400;">500034</div>
<div class="t" style="left:236px;top:636px;font-size:11.9px;line-height:11.9px;color:#25282d;font-weight:700;">City*</div>
<svg class="a" style="left:556.5px;top:633.5px;" width="14" height="14" viewBox="0 0 14 14"><circle cx="7" cy="7" r="6" fill="none" stroke="#7a7a7a" stroke-width="1.2"/><rect x="6.45" y="6" width="1.1" height="4.4" fill="#7a7a7a"/><circle cx="7" cy="4.1" r="0.75" fill="#7a7a7a"/></svg>
<div class="a" style="left:236px;top:650px;width:334px;height:34px;border:1px solid #ababab;border-radius:5px;background:#e9ecef"></div>
<div class="t" style="left:245.5px;top:662px;font-size:12.3px;line-height:12.3px;color:#6b7785;font-weight:400;">Hyderabad</div>
<div class="t" style="left:236px;top:728px;font-size:11.9px;line-height:11.9px;color:#25282d;font-weight:700;">Aadhaar Card</div>
<svg class="a" style="left:554.5px;top:722.8px;" width="14" height="14" viewBox="0 0 14 14"><circle cx="7" cy="7" r="6" fill="none" stroke="#7a7a7a" stroke-width="1.2"/><rect x="6.45" y="6" width="1.1" height="4.4" fill="#7a7a7a"/><circle cx="7" cy="4.1" r="0.75" fill="#7a7a7a"/></svg>
<div class="a" style="left:236px;top:743px;width:262px;height:34px;border:1px solid #ababab;border-radius:5px;background:#fff"></div>
<div class="a" style="left:323px;top:743px;width:1px;height:34px;background:#ababab"></div>
<div class="t" style="left:246px;top:754px;font-size:12.0px;line-height:12.0px;color:#2b2f33;font-weight:400;">Choose File</div>
<div class="t" style="left:336px;top:754px;font-size:12.1px;line-height:12.1px;color:#6c757d;font-weight:400;">No file chosen</div>
<svg class="a" style="left:507px;top:744px;" width="53" height="37" viewBox="0 0 53 37"><rect x="0" y="0" width="53" height="37" fill="#ababab"/><rect x="0" y="0" width="53" height="1" fill="#c4c4c4"/><rect x="11" y="2" width="0.6" height="30" fill="#999"/><g fill="#9c9c9c"><rect x="3" y="5" width="5" height="0.8"/><rect x="3" y="9" width="5" height="0.8"/><rect x="3" y="13" width="5" height="0.8"/><rect x="3" y="17" width="5" height="0.8"/><rect x="3" y="21" width="5" height="0.8"/><rect x="3" y="25" width="5" height="0.8"/><rect x="13" y="22" width="36" height="0.8"/><rect x="13" y="27" width="36" height="0.8"/></g><rect x="20" y="12" width="13" height="9" fill="#f4f4f4"/><rect x="21" y="14" width="9" height="0.8" fill="#8aa6d6"/><rect x="29" y="18" width="4" height="1.3" fill="#3cb44b"/><rect x="0" y="34" width="53" height="3" fill="#1d2230"/><rect x="2" y="34.2" width="10" height="1.8" fill="#d8e4ef"/><rect x="0" y="33.2" width="53" height="0.9" fill="#6aaee0"/></svg>
<svg class="a" style="left:544px;top:743px;" width="17" height="17" viewBox="0 0 17 17"><circle cx="8.5" cy="8.5" r="8" fill="#000"/><path d="M4.8 4.8 L12.2 12.2 M12.2 4.8 L4.8 12.2" stroke="#fff" stroke-width="1.2"/></svg>
<div class="t" style="left:236px;top:815px;font-size:11.9px;line-height:11.9px;color:#25282d;font-weight:700;">FATCA Country Residency</div>
<svg class="a" style="left:554.5px;top:810px;" width="14" height="14" viewBox="0 0 14 14"><circle cx="7" cy="7" r="6" fill="none" stroke="#7a7a7a" stroke-width="1.2"/><rect x="6.45" y="6" width="1.1" height="4.4" fill="#7a7a7a"/><circle cx="7" cy="4.1" r="0.75" fill="#7a7a7a"/></svg>
<div class="a" style="left:236px;top:830px;width:334px;height:34px;border:1px solid #ababab;border-radius:5px;background:#fff"></div>
<div class="t" style="left:245.5px;top:842px;font-size:11.2px;line-height:11.2px;color:#9b9b9b;font-weight:400;">Select FATCA Country Residency</div>
<svg class="a" style="left:549px;top:843.9px;" width="10" height="5" viewBox="0 0 10 5"><path d="M0 0 H10 L5 5 Z" fill="#8a8a8a"/></svg>
<div class="t" style="left:236px;top:888px;font-size:11.9px;line-height:11.9px;color:#25282d;font-weight:700;">Country of citizenship</div>
<svg class="a" style="left:554.5px;top:883px;" width="14" height="14" viewBox="0 0 14 14"><circle cx="7" cy="7" r="6" fill="none" stroke="#7a7a7a" stroke-width="1.2"/><rect x="6.45" y="6" width="1.1" height="4.4" fill="#7a7a7a"/><circle cx="7" cy="4.1" r="0.75" fill="#7a7a7a"/></svg>
<div class="a" style="left:236px;top:903px;width:334px;height:34px;border:1px solid #ababab;border-radius:5px;background:#fff"></div>
<div class="t" style="left:245.5px;top:915px;font-size:11.2px;line-height:11.2px;color:#9b9b9b;font-weight:400;">Select Country of citizenship</div>
<svg class="a" style="left:549px;top:916.9px;" width="10" height="5" viewBox="0 0 10 5"><path d="M0 0 H10 L5 5 Z" fill="#8a8a8a"/></svg>
<div class="t" style="left:236px;top:961px;font-size:11.9px;line-height:11.9px;color:#25282d;font-weight:700;">TIN Exempt Reason</div>
<svg class="a" style="left:554.5px;top:955.8px;" width="14" height="14" viewBox="0 0 14 14"><circle cx="7" cy="7" r="6" fill="none" stroke="#7a7a7a" stroke-width="1.2"/><rect x="6.45" y="6" width="1.1" height="4.4" fill="#7a7a7a"/><circle cx="7" cy="4.1" r="0.75" fill="#7a7a7a"/></svg>
<div class="a" style="left:236px;top:976px;width:334px;height:34px;border:1px solid #ababab;border-radius:5px;background:#fff"></div>
<div class="t" style="left:245.5px;top:988px;font-size:11.2px;line-height:11.2px;color:#9b9b9b;font-weight:400;">Select TIN Exempt Reason</div>
<svg class="a" style="left:549px;top:989.9px;" width="10" height="5" viewBox="0 0 10 5"><path d="M0 0 H10 L5 5 Z" fill="#8a8a8a"/></svg>
<div class="t" style="left:618px;top:175px;font-size:11.9px;line-height:11.9px;color:#25282d;font-weight:700;">Last Name*</div>
<svg class="a" style="left:938.8px;top:173px;" width="14" height="14" viewBox="0 0 14 14"><circle cx="7" cy="7" r="6" fill="none" stroke="#7a7a7a" stroke-width="1.2"/><rect x="6.45" y="6" width="1.1" height="4.4" fill="#7a7a7a"/><circle cx="7" cy="4.1" r="0.75" fill="#7a7a7a"/></svg>
<div class="a" style="left:618px;top:189px;width:335px;height:34px;border:1px solid #ababab;border-radius:5px;background:#fff"></div>
<div class="t" style="left:627.5px;top:201px;font-size:12.3px;line-height:12.3px;color:#6b7785;font-weight:400;">t</div>
<div class="t" style="left:618px;top:253px;font-size:11.9px;line-height:11.9px;color:#25282d;font-weight:700;">Mobile No*</div>
<svg class="a" style="left:936.9px;top:248px;" width="14" height="14" viewBox="0 0 14 14"><circle cx="7" cy="7" r="6" fill="none" stroke="#7a7a7a" stroke-width="1.2"/><rect x="6.45" y="6" width="1.1" height="4.4" fill="#7a7a7a"/><circle cx="7" cy="4.1" r="0.75" fill="#7a7a7a"/></svg>
<div class="a" style="left:618px;top:268px;width:115px;height:34px;border:1px solid #ababab;border-radius:5px;background:#fff"></div>
<div class="t" style="left:627.5px;top:280px;font-size:11.2px;line-height:11.2px;color:#6b7785;font-weight:400;">IN 91</div>
<svg class="a" style="left:712px;top:281.9px;" width="10" height="5" viewBox="0 0 10 5"><path d="M0 0 H10 L5 5 Z" fill="#8a8a8a"/></svg>
<div class="t" style="left:692.5px;transform:translateX(-50%);top:282px;font-size:10px;line-height:10px;color:#888;font-weight:400;">×</div>
<div class="a" style="left:741px;top:268px;width:212px;height:34px;border:1px solid #ababab;border-radius:5px;background:#fff"></div>
<div class="t" style="left:750.5px;top:280px;font-size:12.3px;line-height:12.3px;color:#6b7785;font-weight:400;">6546464564</div>
<div class="t" style="right:397px;top:310px;font-size:16.4px;line-height:16.4px;color:#0d6efd;font-weight:400;text-decoration:underline;text-underline-offset:1px;text-decoration-thickness:1px">Verify</div>
<div class="t" style="left:618px;top:353px;font-size:11.9px;line-height:11.9px;color:#25282d;font-weight:700;">PAN Number*</div>
<svg class="a" style="left:938.8px;top:350.5px;" width="14" height="14" viewBox="0 0 14 14"><circle cx="7" cy="7" r="6" fill="none" stroke="#7a7a7a" stroke-width="1.2"/><rect x="6.45" y="6" width="1.1" height="4.4" fill="#7a7a7a"/><circle cx="7" cy="4.1" r="0.75" fill="#7a7a7a"/></svg>
<div class="a" style="left:618px;top:367px;width:335px;height:34px;border:1px solid #ababab;border-radius:5px;background:#fff"></div>
<div class="t" style="left:627.5px;top:379px;font-size:12.3px;line-height:12.3px;color:#6b7785;font-weight:400;">WWWWW1211E</div>
<div class="t" style="left:618px;top:568px;font-size:11.9px;line-height:11.9px;color:#25282d;font-weight:700;">Country*</div>
<svg class="a" style="left:936.9px;top:562.5px;" width="14" height="14" viewBox="0 0 14 14"><circle cx="7" cy="7" r="6" fill="none" stroke="#7a7a7a" stroke-width="1.2"/><rect x="6.45" y="6" width="1.1" height="4.4" fill="#7a7a7a"/><circle cx="7" cy="4.1" r="0.75" fill="#7a7a7a"/></svg>
<div class="a" style="left:618px;top:583px;width:335px;height:34px;border:1px solid #ababab;border-radius:5px;background:#e9ecef"></div>
<div class="t" style="left:627.5px;top:595px;font-size:11.2px;line-height:11.2px;color:#6b7785;font-weight:400;">INDIA</div>
<svg class="a" style="left:932px;top:596.9px;" width="10" height="5" viewBox="0 0 10 5"><path d="M0 0 H10 L5 5 Z" fill="#8a8a8a"/></svg>
<div class="t" style="left:618px;top:641px;font-size:11.9px;line-height:11.9px;color:#25282d;font-weight:700;">Proof of Address Upload</div>
<svg class="a" style="left:936.9px;top:636px;" width="14" height="14" viewBox="0 0 14 14"><circle cx="7" cy="7" r="6" fill="none" stroke="#7a7a7a" stroke-width="1.2"/><rect x="6.45" y="6" width="1.1" height="4.4" fill="#7a7a7a"/><circle cx="7" cy="4.1" r="0.75" fill="#7a7a7a"/></svg>
<div class="a" style="left:618px;top:656px;width:262px;height:34px;border:1px solid #ababab;border-radius:5px;background:#fff"></div>
<div class="a" style="left:705px;top:656px;width:1px;height:34px;background:#ababab"></div>
<div class="t" style="left:628px;top:667px;font-size:12.0px;line-height:12.0px;color:#2b2f33;font-weight:400;">Choose File</div>
<div class="t" style="left:718px;top:667px;font-size:12.1px;line-height:12.1px;color:#6c757d;font-weight:400;">No file chosen</div>
<svg class="a" style="left:890px;top:657px;" width="53" height="37" viewBox="0 0 53 37"><rect x="0" y="0" width="53" height="37" fill="#ababab"/><rect x="0" y="0" width="53" height="1" fill="#c4c4c4"/><rect x="11" y="2" width="0.6" height="30" fill="#999"/><g fill="#9c9c9c"><rect x="3" y="5" width="5" height="0.8"/><rect x="3" y="9" width="5" height="0.8"/><rect x="3" y="13" width="5" height="0.8"/><rect x="3" y="17" width="5" height="0.8"/><rect x="3" y="21" width="5" height="0.8"/><rect x="3" y="25" width="5" height="0.8"/><rect x="13" y="22" width="36" height="0.8"/><rect x="13" y="27" width="36" height="0.8"/></g><rect x="20" y="12" width="13" height="9" fill="#f4f4f4"/><rect x="21" y="14" width="9" height="0.8" fill="#8aa6d6"/><rect x="29" y="18" width="4" height="1.3" fill="#3cb44b"/><rect x="0" y="34" width="53" height="3" fill="#1d2230"/><rect x="2" y="34.2" width="10" height="1.8" fill="#d8e4ef"/><rect x="0" y="33.2" width="53" height="0.9" fill="#6aaee0"/></svg>
<svg class="a" style="left:927px;top:656px;" width="17" height="17" viewBox="0 0 17 17"><circle cx="8.5" cy="8.5" r="8" fill="#000"/><path d="M4.8 4.8 L12.2 12.2 M12.2 4.8 L4.8 12.2" stroke="#fff" stroke-width="1.2"/></svg>
<div class="t" style="left:618px;top:728px;font-size:11.9px;line-height:11.9px;color:#25282d;font-weight:700;">Passport</div>
<svg class="a" style="left:936.9px;top:723px;" width="14" height="14" viewBox="0 0 14 14"><circle cx="7" cy="7" r="6" fill="none" stroke="#7a7a7a" stroke-width="1.2"/><rect x="6.45" y="6" width="1.1" height="4.4" fill="#7a7a7a"/><circle cx="7" cy="4.1" r="0.75" fill="#7a7a7a"/></svg>
<div class="a" style="left:618px;top:743px;width:262px;height:34px;border:1px solid #ababab;border-radius:5px;background:#fff"></div>
<div class="a" style="left:705px;top:743px;width:1px;height:34px;background:#ababab"></div>
<div class="t" style="left:628px;top:754px;font-size:12.0px;line-height:12.0px;color:#2b2f33;font-weight:400;">Choose File</div>
<div class="t" style="left:718px;top:754px;font-size:12.1px;line-height:12.1px;color:#6c757d;font-weight:400;">No file chosen</div>
<svg class="a" style="left:890px;top:744px;" width="53" height="37" viewBox="0 0 53 37"><rect x="0" y="0" width="53" height="37" fill="#ababab"/><rect x="0" y="0" width="53" height="1" fill="#c4c4c4"/><rect x="11" y="2" width="0.6" height="30" fill="#999"/><g fill="#9c9c9c"><rect x="3" y="5" width="5" height="0.8"/><rect x="3" y="9" width="5" height="0.8"/><rect x="3" y="13" width="5" height="0.8"/><rect x="3" y="17" width="5" height="0.8"/><rect x="3" y="21" width="5" height="0.8"/><rect x="3" y="25" width="5" height="0.8"/><rect x="13" y="22" width="36" height="0.8"/><rect x="13" y="27" width="36" height="0.8"/></g><rect x="20" y="12" width="13" height="9" fill="#f4f4f4"/><rect x="21" y="14" width="9" height="0.8" fill="#8aa6d6"/><rect x="29" y="18" width="4" height="1.3" fill="#3cb44b"/><rect x="0" y="34" width="53" height="3" fill="#1d2230"/><rect x="2" y="34.2" width="10" height="1.8" fill="#d8e4ef"/><rect x="0" y="33.2" width="53" height="0.9" fill="#6aaee0"/></svg>
<svg class="a" style="left:927px;top:743px;" width="17" height="17" viewBox="0 0 17 17"><circle cx="8.5" cy="8.5" r="8" fill="#000"/><path d="M4.8 4.8 L12.2 12.2 M12.2 4.8 L4.8 12.2" stroke="#fff" stroke-width="1.2"/></svg>
<div class="t" style="left:618px;top:815px;font-size:11.9px;line-height:11.9px;color:#25282d;font-weight:700;">Country of Birth</div>
<svg class="a" style="left:936.9px;top:810px;" width="14" height="14" viewBox="0 0 14 14"><circle cx="7" cy="7" r="6" fill="none" stroke="#7a7a7a" stroke-width="1.2"/><rect x="6.45" y="6" width="1.1" height="4.4" fill="#7a7a7a"/><circle cx="7" cy="4.1" r="0.75" fill="#7a7a7a"/></svg>
<div class="a" style="left:618px;top:830px;width:335px;height:34px;border:1px solid #ababab;border-radius:5px;background:#fff"></div>
<div class="t" style="left:627.5px;top:842px;font-size:11.2px;line-height:11.2px;color:#9b9b9b;font-weight:400;">Select Country of Birth</div>
<svg class="a" style="left:932px;top:843.9px;" width="10" height="5" viewBox="0 0 10 5"><path d="M0 0 H10 L5 5 Z" fill="#8a8a8a"/></svg>
<div class="t" style="left:618px;top:883px;font-size:11.9px;line-height:11.9px;color:#25282d;font-weight:700;">TAX Identification number</div>
<svg class="a" style="left:938.8px;top:881px;" width="14" height="14" viewBox="0 0 14 14"><circle cx="7" cy="7" r="6" fill="none" stroke="#7a7a7a" stroke-width="1.2"/><rect x="6.45" y="6" width="1.1" height="4.4" fill="#7a7a7a"/><circle cx="7" cy="4.1" r="0.75" fill="#7a7a7a"/></svg>
<div class="a" style="left:618px;top:897px;width:335px;height:34px;border:1px solid #ababab;border-radius:5px;background:#fff"></div>
<div class="t" style="left:627.5px;top:909px;font-size:12.3px;line-height:12.3px;color:#5f6368;font-weight:400;">Enter TAX Identification number</div>
<div class="t" style="left:1001px;top:180px;font-size:11.9px;line-height:11.9px;color:#25282d;font-weight:700;">Date of Birth</div>
<svg class="a" style="left:1319px;top:175px;" width="14" height="14" viewBox="0 0 14 14"><circle cx="7" cy="7" r="6" fill="none" stroke="#7a7a7a" stroke-width="1.2"/><rect x="6.45" y="6" width="1.1" height="4.4" fill="#7a7a7a"/><circle cx="7" cy="4.1" r="0.75" fill="#7a7a7a"/></svg>
<div class="a" style="left:1001px;top:195px;width:334px;height:34px;border:1px solid #ababab;border-radius:5px;background:#fff"></div>
<div class="t" style="left:1010.5px;top:207px;font-size:12.3px;line-height:12.3px;color:#6b7785;font-weight:400;">08/09/1998</div>
<svg class="a" style="left:1309px;top:203px;" width="17" height="17" viewBox="0 0 17 17"><rect x="0.9" y="2.4" width="15" height="13.6" rx="2.6" fill="none" stroke="#5b6670" stroke-width="1.15"/><path d="M1 6.4 H16 M4.4 1.1 V3 M11.6 1.1 V3" stroke="#5b6670" stroke-width="1.15"/><g fill="#5b6670"><rect x="3.6" y="8.7" width="1.5" height="1.4" rx="0.5"/><rect x="7.3" y="8.7" width="1.6" height="1.4" rx="0.5"/><rect x="11" y="8.7" width="1.5" height="1.4" rx="0.5"/><rect x="3.6" y="11.7" width="1.5" height="1.4" rx="0.5"/><rect x="7.3" y="11.7" width="1.6" height="1.4" rx="0.5"/><rect x="11" y="11.7" width="1.5" height="1.4" rx="0.5"/></g></svg>
<div class="t" style="left:1001px;top:248px;font-size:11.9px;line-height:11.9px;color:#25282d;font-weight:700;">Passport Number*</div>
<svg class="a" style="left:1320px;top:246px;" width="14" height="14" viewBox="0 0 14 14"><circle cx="7" cy="7" r="6" fill="none" stroke="#7a7a7a" stroke-width="1.2"/><rect x="6.45" y="6" width="1.1" height="4.4" fill="#7a7a7a"/><circle cx="7" cy="4.1" r="0.75" fill="#7a7a7a"/></svg>
<div class="a" style="left:1001px;top:262px;width:334px;height:34px;border:1px solid #ababab;border-radius:5px;background:#fff"></div>
<div class="t" style="left:1010.5px;top:274px;font-size:12.3px;line-height:12.3px;color:#6b7785;font-weight:400;">W32255676</div>
<div class="t" style="left:1001px;top:359px;font-size:11.9px;line-height:11.9px;color:#25282d;font-weight:700;">Nationality</div>
<svg class="a" style="left:1319px;top:353px;" width="14" height="14" viewBox="0 0 14 14"><circle cx="7" cy="7" r="6" fill="none" stroke="#7a7a7a" stroke-width="1.2"/><rect x="6.45" y="6" width="1.1" height="4.4" fill="#7a7a7a"/><circle cx="7" cy="4.1" r="0.75" fill="#7a7a7a"/></svg>
<div class="a" style="left:1001px;top:373px;width:334px;height:34px;border:1px solid #ababab;border-radius:5px;background:#fff"></div>
<div class="t" style="left:1010.5px;top:385px;font-size:11.2px;line-height:11.2px;color:#6b7785;font-weight:400;">Indian</div>
<svg class="a" style="left:1314px;top:386.9px;" width="10" height="5" viewBox="0 0 10 5"><path d="M0 0 H10 L5 5 Z" fill="#8a8a8a"/></svg>
<div class="t" style="left:1294.5px;transform:translateX(-50%);top:386px;font-size:10px;line-height:10px;color:#888;font-weight:400;">×</div>
<div class="t" style="left:1001px;top:563px;font-size:11.9px;line-height:11.9px;color:#25282d;font-weight:700;">State*</div>
<svg class="a" style="left:1320px;top:560.5px;" width="14" height="14" viewBox="0 0 14 14"><circle cx="7" cy="7" r="6" fill="none" stroke="#7a7a7a" stroke-width="1.2"/><rect x="6.45" y="6" width="1.1" height="4.4" fill="#7a7a7a"/><circle cx="7" cy="4.1" r="0.75" fill="#7a7a7a"/></svg>
<div class="a" style="left:1001px;top:577px;width:334px;height:34px;border:1px solid #ababab;border-radius:5px;background:#e9ecef"></div>
<div class="t" style="left:1010.5px;top:589px;font-size:12.3px;line-height:12.3px;color:#6b7785;font-weight:400;">Telangana</div>
<div class="t" style="left:1001px;top:641px;font-size:11.9px;line-height:11.9px;color:#25282d;font-weight:700;">PAN Card</div>
<svg class="a" style="left:1319px;top:636px;" width="14" height="14" viewBox="0 0 14 14"><circle cx="7" cy="7" r="6" fill="none" stroke="#7a7a7a" stroke-width="1.2"/><rect x="6.45" y="6" width="1.1" height="4.4" fill="#7a7a7a"/><circle cx="7" cy="4.1" r="0.75" fill="#7a7a7a"/></svg>
<div class="a" style="left:1001px;top:656px;width:261px;height:34px;border:1px solid #ababab;border-radius:5px;background:#fff"></div>
<div class="a" style="left:1088px;top:656px;width:1px;height:34px;background:#ababab"></div>
<div class="t" style="left:1011px;top:667px;font-size:12.0px;line-height:12.0px;color:#2b2f33;font-weight:400;">Choose File</div>
<div class="t" style="left:1101px;top:667px;font-size:12.1px;line-height:12.1px;color:#6c757d;font-weight:400;">No file chosen</div>
<svg class="a" style="left:1272px;top:657px;" width="53" height="37" viewBox="0 0 53 37"><rect x="0" y="0" width="53" height="37" fill="#ababab"/><rect x="0" y="0" width="53" height="1" fill="#c4c4c4"/><rect x="11" y="2" width="0.6" height="30" fill="#999"/><g fill="#9c9c9c"><rect x="3" y="5" width="5" height="0.8"/><rect x="3" y="9" width="5" height="0.8"/><rect x="3" y="13" width="5" height="0.8"/><rect x="3" y="17" width="5" height="0.8"/><rect x="3" y="21" width="5" height="0.8"/><rect x="3" y="25" width="5" height="0.8"/><rect x="13" y="22" width="36" height="0.8"/><rect x="13" y="27" width="36" height="0.8"/></g><rect x="20" y="12" width="13" height="9" fill="#f4f4f4"/><rect x="21" y="14" width="9" height="0.8" fill="#8aa6d6"/><rect x="29" y="18" width="4" height="1.3" fill="#3cb44b"/><rect x="0" y="34" width="53" height="3" fill="#1d2230"/><rect x="2" y="34.2" width="10" height="1.8" fill="#d8e4ef"/><rect x="0" y="33.2" width="53" height="0.9" fill="#6aaee0"/></svg>
<svg class="a" style="left:1309px;top:656px;" width="17" height="17" viewBox="0 0 17 17"><circle cx="8.5" cy="8.5" r="8" fill="#000"/><path d="M4.8 4.8 L12.2 12.2 M12.2 4.8 L4.8 12.2" stroke="#fff" stroke-width="1.2"/></svg>
<div class="t" style="left:1001px;top:723px;font-size:11.9px;line-height:11.9px;color:#25282d;font-weight:700;">FATCA Applicable*</div>
<svg class="a" style="left:1110.4px;top:719.5px;" width="14" height="14" viewBox="0 0 14 14"><circle cx="7" cy="7" r="6" fill="none" stroke="#7a7a7a" stroke-width="1.2"/><rect x="6.45" y="6" width="1.1" height="4.4" fill="#7a7a7a"/><circle cx="7" cy="4.1" r="0.75" fill="#7a7a7a"/></svg>
<div class="a" style="left:1001px;top:741px;width:77px;height:34px;border:1px solid #c8c8c8;border-radius:17px;background:#fff"></div>
<svg class="a" style="left:1017.5px;top:751.0px;" width="14" height="14" viewBox="0 0 14 14"><circle cx="7" cy="7" r="6.2" fill="#fff" stroke="#0d6efd" stroke-width="1.3"/><circle cx="7" cy="7" r="3.9" fill="#0d6efd"/></svg>
<div class="t" style="left:1039.5px;top:751px;font-size:14.2px;line-height:14.2px;color:#212529;font-weight:400;">Yes</div>
<div class="a" style="left:1093px;top:741px;width:74px;height:34px;border:1px solid #c8c8c8;border-radius:17px;background:#fff"></div>
<svg class="a" style="left:1109.5px;top:751.0px;" width="14" height="14" viewBox="0 0 14 14"><circle cx="7" cy="7" r="6.2" fill="#fff" stroke="#555" stroke-width="1.1"/></svg>
<div class="t" style="left:1131.5px;top:751px;font-size:14.2px;line-height:14.2px;color:#212529;font-weight:400;">No</div>
<div class="t" style="left:1001px;top:810px;font-size:11.9px;line-height:11.9px;color:#25282d;font-weight:700;">Place of Birth</div>
<svg class="a" style="left:1320px;top:808px;" width="14" height="14" viewBox="0 0 14 14"><circle cx="7" cy="7" r="6" fill="none" stroke="#7a7a7a" stroke-width="1.2"/><rect x="6.45" y="6" width="1.1" height="4.4" fill="#7a7a7a"/><circle cx="7" cy="4.1" r="0.75" fill="#7a7a7a"/></svg>
<div class="a" style="left:1001px;top:824px;width:334px;height:34px;border:1px solid #ababab;border-radius:5px;background:#fff"></div>
<div class="t" style="left:1010.5px;top:836px;font-size:12.3px;line-height:12.3px;color:#5f6368;font-weight:400;">Enter Place of Birth</div>
<div class="t" style="left:1001px;top:883px;font-size:11.9px;line-height:11.9px;color:#25282d;font-weight:700;">TAX EXEMPT</div>
<svg class="a" style="left:1079.3px;top:879.2px;" width="14" height="14" viewBox="0 0 14 14"><circle cx="7" cy="7" r="6" fill="none" stroke="#7a7a7a" stroke-width="1.2"/><rect x="6.45" y="6" width="1.1" height="4.4" fill="#7a7a7a"/><circle cx="7" cy="4.1" r="0.75" fill="#7a7a7a"/></svg>
<div class="a" style="left:1001px;top:901px;width:77px;height:34px;border:1px solid #c8c8c8;border-radius:17px;background:#fff"></div>
<svg class="a" style="left:1017.5px;top:911.0px;" width="14" height="14" viewBox="0 0 14 14"><circle cx="7" cy="7" r="6.2" fill="#fff" stroke="#555" stroke-width="1.1"/></svg>
<div class="t" style="left:1039.5px;top:911px;font-size:14.2px;line-height:14.2px;color:#212529;font-weight:400;">Yes</div>
<div class="a" style="left:1093px;top:901px;width:74px;height:34px;border:1px solid #c8c8c8;border-radius:17px;background:#fff"></div>
<svg class="a" style="left:1109.5px;top:911.0px;" width="14" height="14" viewBox="0 0 14 14"><circle cx="7" cy="7" r="6.2" fill="#fff" stroke="#0d6efd" stroke-width="1.3"/><circle cx="7" cy="7" r="3.9" fill="#0d6efd"/></svg>
<div class="t" style="left:1131.5px;top:911px;font-size:14.2px;line-height:14.2px;color:#212529;font-weight:400;">No</div>
<div class="a" style="left:877px;top:1041px;width:225px;height:32px;border:1px solid #9a9a9a;border-radius:4px;background:#fff"></div>
<div class="t" style="left:989.5px;transform:translateX(-50%);top:1051px;font-size:12.6px;line-height:12.6px;color:#33373b;font-weight:400;">Cancel</div>
<div class="a" style="left:1110px;top:1041px;width:225px;height:32px;background:#ad6bf4;border-radius:4px"></div>
<div class="t" style="left:1222.5px;transform:translateX(-50%);top:1051px;font-size:12.2px;line-height:12.2px;color:#fff;font-weight:700;letter-spacing:-0.3px">Save</div>
<div class="a" style="left:0;top:1127px;width:1350px;height:19px;background:#dcb4fa;box-shadow:0 -1px 5px rgba(0,0,0,0.16)"></div>
<svg class="a" style="left:60px;top:8px;" width="100" height="40" viewBox="0 0 100 40"><g font-family="Liberation Serif" fill="#3a3a3a"><text x="4.4" y="27.8" font-size="25.5" textLength="15" lengthAdjust="spacingAndGlyphs">R</text><text x="21.5" y="27.8" font-size="16.5" textLength="35.5" lengthAdjust="spacingAndGlyphs">EVAL</text><text x="59.3" y="27.8" font-size="25.5" textLength="8.8" lengthAdjust="spacingAndGlyphs">E</text><text x="70.7" y="27.8" font-size="16.5" textLength="20" lengthAdjust="spacingAndGlyphs">RP</text></g><path d="M60.4 7.4 V2.7 H94.4 V36.1 H60.4 V31.1" fill="none" stroke="#333" stroke-width="1.9"/></svg>
</body></html>
